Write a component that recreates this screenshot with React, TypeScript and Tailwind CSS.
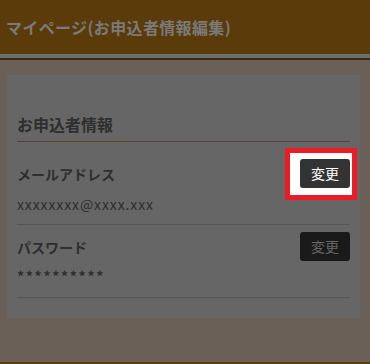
const font = { fontFamily: '"Noto Sans CJK JP", "Noto Sans", sans-serif' };

export default function App() {
  return (
    <div className="h-[364px] w-[370px] flex flex-col bg-[#6a6058]" style={font}>
      <header className="h-[54px] shrink-0 bg-[#5b3b09] flex items-center px-[6px]">
        <h1 className="text-[16px] font-bold text-[#7a7a7a] leading-none tracking-[0.35px]">マイページ(お申込者情報編集)</h1>
      </header>
      <div className="h-[4px] shrink-0 bg-[#6e6e6e]" />
      <div className="h-[2px] shrink-0 bg-[#3d2c12]" />

      <main className="flex-1 pl-[7px] pr-[10px] pt-[15px]">
        <section className="bg-[#666666] px-[10px] pt-[37px] pb-[20px]">
          <h2 className="text-[16px] leading-[24px] font-bold text-[#2e2e2e] pb-[5px] border-b border-[#5a4222]">
            お申込者情報
          </h2>

          <div className="border-b border-[#565656] pb-[10px]">
            <div className="flex items-center justify-between mt-[17px]">
              <span className="text-[14px] leading-[20px] font-bold text-[#2e2e2e]">メールアドレス</span>
              <div className="relative">
                <div className="absolute left-[-15px] right-[-7px] top-[-11px] bottom-[-12px] border-[5px] border-[#ed1c24] bg-white" />
                <button className="relative w-[50px] h-[29px] rounded-[3px] bg-[#333333] text-white text-[14px]">
                  変更
                </button>
              </div>
            </div>
            <p className="text-[14px] leading-[20px] text-[#2e2e2e] mt-[6px] tracking-[0.9px]">xxxxxxxx@xxxx.xxx</p>
          </div>

          <div className="border-b border-[#565656] pb-[11px]">
            <div className="flex items-center justify-between mt-[7px]">
              <span className="text-[14px] leading-[20px] font-bold text-[#2e2e2e]">パスワード</span>
              <button className="w-[50px] h-[29px] rounded-[3px] bg-[#1a1a1a] text-[#666666] text-[14px]">
                変更
              </button>
            </div>
            <p className="text-[14px] leading-[20px] text-[#2e2e2e] mt-[5px] tracking-[1.7px] font-bold">**********</p>
          </div>
        </section>
      </main>

      <div className="h-[2px] shrink-0 bg-[#5b3b09]" />
    </div>
  );
}
